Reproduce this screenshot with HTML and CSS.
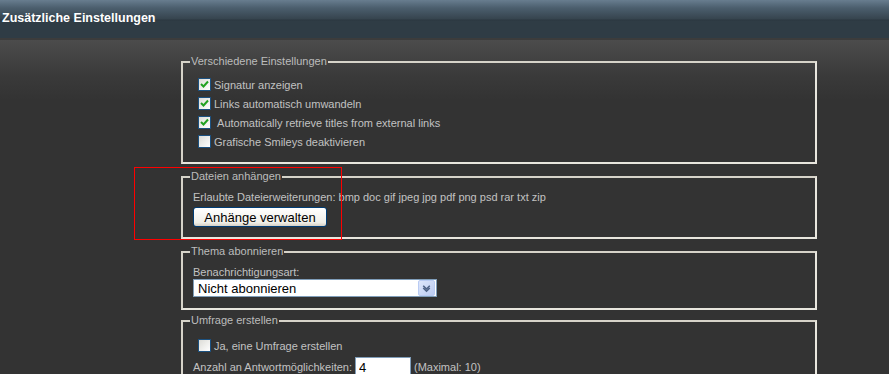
FILE: index.html
```html
<!DOCTYPE html>
<html lang="de">
<head>
    <meta charset="UTF-8">
    <title>Zusätzliche Einstellungen</title>
    <link rel="stylesheet" href="styles.css">
</head>
<body>
    <div class="header">
        <h1>Zusätzliche Einstellungen</h1>
    </div>

    <div class="content">
        <fieldset class="misc">
            <legend>Verschiedene Einstellungen</legend>
            <label class="check-row"><span class="box checked"><svg viewBox="0 0 11 11"><path d="M2 5 L4.5 7.5 L9 2.5" /></svg></span>Signatur anzeigen</label>
            <label class="check-row"><span class="box checked"><svg viewBox="0 0 11 11"><path d="M2 5 L4.5 7.5 L9 2.5" /></svg></span>Links automatisch umwandeln</label>
            <label class="check-row"><span class="box checked"><svg viewBox="0 0 11 11"><path d="M2 5 L4.5 7.5 L9 2.5" /></svg></span>&nbsp;Automatically retrieve titles from external links</label>
            <label class="check-row"><span class="box"></span>Grafische Smileys deaktivieren</label>
        </fieldset>

        <fieldset class="attach">
            <legend>Dateien anhängen</legend>
            <div class="text-row">Erlaubte Dateierweiterungen: bmp doc gif jpeg jpg pdf png psd rar txt zip</div>
            <button class="btn" type="button">Anhänge verwalten</button>
        </fieldset>

        <fieldset class="subscribe">
            <legend>Thema abonnieren</legend>
            <div class="text-row">Benachrichtigungsart:</div>
            <div class="select">
                <select>
                    <option>Nicht abonnieren</option>
                </select>
                <span class="arrow"><svg viewBox="0 0 15 15"><path d="M4 5 L7.5 8.5 L11 5 M4 7.5 L7.5 11 L11 7.5" /></svg></span>
            </div>
        </fieldset>

        <fieldset>
            <legend>Umfrage erstellen</legend>
            <label class="check-row poll"><span class="box"></span>Ja, eine Umfrage erstellen</label>
            <div class="count-row">
                Anzahl an Antwortmöglichkeiten:
                <input class="count" type="text" value="4">
                (Maximal: 10)
            </div>
        </fieldset>

        <div class="highlight"></div>
    </div>
</body>
</html>
```

FILE: styles.css
```css
body {
    margin: 0;
    font-family: "Liberation Sans", Arial, sans-serif;
    font-size: 11px;
    color: #c2c2c2;
    background: #333333;
    height: 374px;
    overflow: hidden;
}
.header {
    height: 38px;
    background: linear-gradient(to bottom, #687d8f 0px, #4b5e6d 8px, #36444e 19px, #2b3740 20px, #2f3c45 21px, #2f3c45 38px);
    border-bottom: 2px solid #3c3c3c;
}
.header h1 {
    margin: 0;
    padding: 11px 0 0 2px;
    font-size: 12.5px;
    font-weight: bold;
    color: #ffffff;
    line-height: 15px;
}
.content {
    position: relative;
    padding: 15px 72px 0 181px;
    background: linear-gradient(to bottom, #4c4c4c 0px, #3a3a3a 35px, #333333 60px);
}
fieldset {
    margin: 0 0 6px 0;
    padding: 7px 10px 9px 10px;
    border: 2px solid #d6d3c9;
    border-right-color: #e8e6de;
    border-bottom-color: #e8e6de;
}
fieldset.misc {
    padding-bottom: 11px;
}
fieldset.attach {
    padding-bottom: 10px;
}
fieldset.subscribe {
    padding-bottom: 11px;
    margin-bottom: 4px;
}
legend {
    padding: 0 1px;
    margin-left: -3px;
    line-height: 13px;
    color: #bcbcbc;
}
.check-row {
    display: flex;
    align-items: center;
    height: 19px;
    padding-left: 5px;
}
.box {
    width: 11px;
    height: 11px;
    border: 1px solid #1c5180;
    background: linear-gradient(135deg, #dcdcd7, #ffffff);
    margin-right: 3px;
    display: flex;
}
.box svg {
    width: 11px;
    height: 11px;
    fill: none;
    stroke: #21a121;
    stroke-width: 2;
}
.text-row {
    line-height: 14px;
}
.btn {
    margin-top: 3px;
    width: 134px;
    height: 20px;
    font-family: "Liberation Sans", Arial, sans-serif;
    font-size: 13px;
    color: #000;
    border: 1px solid #003c74;
    border-radius: 3px;
    background: linear-gradient(to bottom, #ffffff, #f0efe8 80%, #d6d0c5);
    padding: 0;
}
.select {
    display: flex;
    width: 241px;
    height: 16px;
    border: 1px solid #7f9db9;
    background: #ffffff;
    padding: 0 1px 0 0;
    align-items: center;
}
.select select {
    flex: 1;
    appearance: none;
    border: none;
    background: transparent;
    font-family: "Liberation Sans", Arial, sans-serif;
    font-size: 13px;
    color: #000;
    padding: 0 0 0 4px;
    height: 16px;
}
.arrow {
    width: 15px;
    height: 14px;
    border: 1px solid #b9cbf3;
    border-radius: 2px;
    background: linear-gradient(135deg, #dde6fb, #bccbf1);
    display: flex;
}
.arrow svg {
    width: 15px;
    height: 14px;
    fill: none;
    stroke: #4d6185;
    stroke-width: 1.6;
}
.poll {
    margin-top: 2px;
}
.count-row {
    display: flex;
    align-items: center;
    gap: 3px;
    margin-top: 2px;
}
.count {
    width: 48px;
    height: 16px;
    border: 1px solid #7f9db9;
    font-family: "Liberation Sans", Arial, sans-serif;
    font-size: 13px;
    padding: 1px 3px;
}
.highlight {
    position: absolute;
    z-index: 1;
    left: 134px;
    top: 127px;
    width: 206px;
    height: 71px;
    border: 1px solid #ff0000;
}
```
